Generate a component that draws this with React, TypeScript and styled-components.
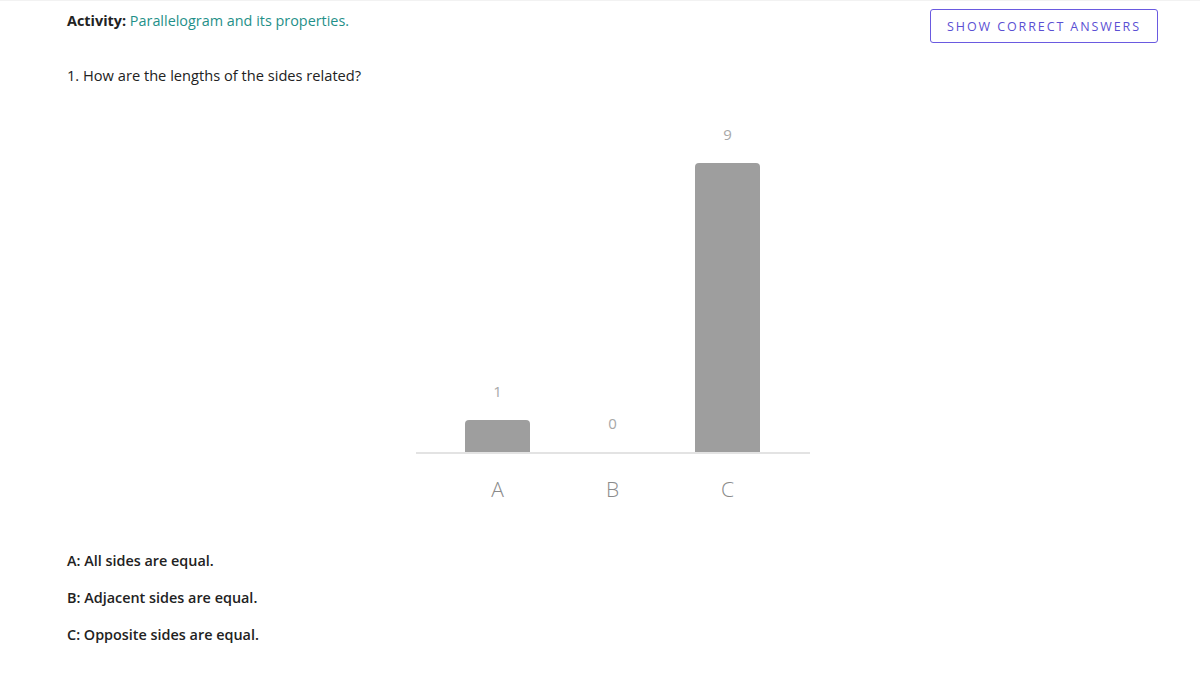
import styled, { createGlobalStyle } from "styled-components";

const GlobalStyle = createGlobalStyle`
  body {
    margin: 0;
    background: #ffffff;
    font-family: "Open Sans", "Noto Sans", sans-serif;
    color: #222222;
  }
`;

type Result = { key: string; count: number; text: string };

const results: Result[] = [
  { key: "A", count: 1, text: "All sides are equal." },
  { key: "B", count: 0, text: "Adjacent sides are equal." },
  { key: "C", count: 9, text: "Opposite sides are equal." },
];

const UNIT = 32.1; // px per answer

const App: React.FC = () => {
  return (
    <Page>
      <GlobalStyle />
      <Header>
        <Title>
          <strong>Activity:</strong> <TitleName>Parallelogram and its properties.</TitleName>
        </Title>
        <ShowButton>SHOW CORRECT ANSWERS</ShowButton>
      </Header>

      <Question>1. How are the lengths of the sides related?</Question>

      <Chart>
        <Plot>
          {results.map((r) => (
            <Column key={r.key}>
              <Value>{r.count}</Value>
              {r.count > 0 && <Bar style={{ height: r.count * UNIT }} />}
            </Column>
          ))}
        </Plot>
        <Categories>
          {results.map((r) => (
            <Category key={r.key}>{r.key}</Category>
          ))}
        </Categories>
      </Chart>

      <Answers>
        {results.map((r) => (
          <Answer key={r.key}>
            {r.key}: {r.text}
          </Answer>
        ))}
      </Answers>
    </Page>
  );
};

export default App;

const Page = styled.div`
  min-height: 675px;
  box-sizing: border-box;
  border-top: 1px solid #f2f2f2;
  padding: 0 42px 0 67px;
`;

const Header = styled.div`
  display: flex;
  justify-content: space-between;
  align-items: flex-start;
  padding-top: 8px;
`;

const Title = styled.div`
  padding-top: 2px;
  font-size: 14.4px;
  line-height: 20px;
  color: #222222;

  strong {
    font-weight: 700;
  }
`;

const TitleName = styled.span`
  color: #1f9089;
`;

const ShowButton = styled.button`
  height: 34px;
  width: 228px;
  box-sizing: border-box;
  background: #ffffff;
  border: 1.5px solid #6a5ae0;
  border-radius: 3px;
  color: #5b4fd3;
  font-family: "Open Sans", "Noto Sans", sans-serif;
  font-size: 12.5px;
  font-weight: 500;
  letter-spacing: 1.9px;
  cursor: pointer;
`;

const Question = styled.div`
  margin-top: 22px;
  font-size: 14.65px;
  line-height: 20px;
  color: #222222;
`;

const Chart = styled.div`
  width: 394px;
  margin: 41px 0 0 349px;
`;

const Plot = styled.div`
  display: grid;
  grid-template-columns: repeat(3, 115px);
  padding: 0 25px 0 24px;
  align-items: end;
  border-bottom: 2px solid #e3e3e3;
`;

const Column = styled.div`
  display: flex;
  flex-direction: column;
  align-items: center;
`;

const Value = styled.div`
  font-size: 15px;
  line-height: 16px;
  color: #a8a8a8;
  margin-bottom: 21px;
`;

const Bar = styled.div`
  width: 65px;
  background: #9e9e9e;
  border-radius: 4px 4px 0 0;
`;

const Categories = styled.div`
  display: grid;
  grid-template-columns: repeat(3, 115px);
  padding: 0 25px 0 24px;
  margin-top: 23px;
`;

const Category = styled.div`
  text-align: center;
  font-size: 21px;
  font-weight: 300;
  line-height: 24px;
  color: #8a8a8a;
`;

const Answers = styled.div`
  display: flex;
  flex-direction: column;
  gap: 17px;
  margin-top: 50px;
`;

const Answer = styled.div`
  font-size: 14.4px;
  font-weight: 600;
  line-height: 20px;
  color: #222222;
`;
